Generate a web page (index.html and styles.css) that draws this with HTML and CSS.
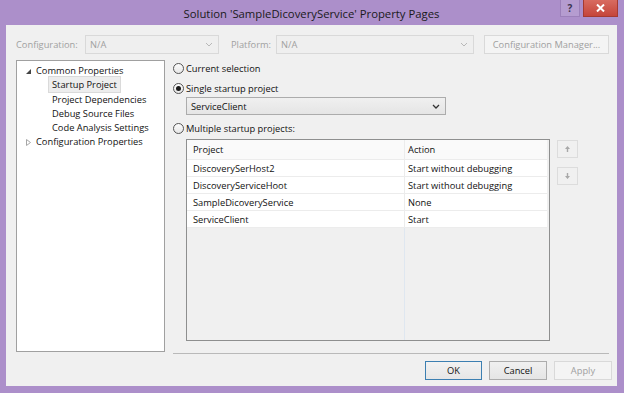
FILE: index.html
```html
<!DOCTYPE html>
<html lang="en">
<head>
  <meta charset="UTF-8">
  <title>Property Pages</title>
  <link rel="stylesheet" href="styles.css">
</head>
<body>
  <div class="window">
    <div class="titlebar">
      <span class="title">Solution 'SampleDicoveryService' Property Pages</span>
      <div class="caption-buttons">
        <span class="cap-btn help">?</span>
        <span class="cap-btn close">
          <svg width="9" height="8" viewBox="0 0 9 8"><path d="M1 0.5 L8 7.5 M8 0.5 L1 7.5" stroke="#fff" stroke-width="2"/></svg>
        </span>
      </div>
    </div>

    <div class="client">
      <div class="config-row">
        <span class="dim label-config">Configuration:</span>
        <div class="combo disabled combo-config">
          <span>N/A</span>
          <svg width="8" height="5" viewBox="0 0 8 5"><path d="M1 1 L4 4 L7 1" fill="none" stroke="#b8b8b8" stroke-width="1"/></svg>
        </div>
        <span class="dim label-platform">Platform:</span>
        <div class="combo disabled combo-platform">
          <span>N/A</span>
          <svg width="8" height="5" viewBox="0 0 8 5"><path d="M1 1 L4 4 L7 1" fill="none" stroke="#b8b8b8" stroke-width="1"/></svg>
        </div>
        <span class="btn disabled cfg-manager">Configuration Manager...</span>
      </div>

      <div class="main">
        <ul class="tree">
          <li class="node">
            <svg class="twisty" width="5" height="5" viewBox="0 0 5 5"><path d="M5 0 L5 5 L0 5 Z" fill="#444"/></svg>
            Common Properties
          </li>
          <li class="leaf"><span class="selected">Startup Project</span></li>
          <li class="leaf"><span>Project Dependencies</span></li>
          <li class="leaf"><span>Debug Source Files</span></li>
          <li class="leaf"><span>Code Analysis Settings</span></li>
          <li class="node">
            <svg class="twisty" width="5" height="7" viewBox="0 0 5 7"><path d="M0.5 0.5 L4.5 3.5 L0.5 6.5 Z" fill="none" stroke="#a6a6a6" stroke-width="1"/></svg>
            Configuration Properties
          </li>
        </ul>

        <div class="page">
          <div class="radio-row"><span class="radio"></span>Current selection</div>
          <div class="radio-row second"><span class="radio checked"></span>Single startup project</div>
          <div class="combo project-combo">
            <span>ServiceClient</span>
            <svg width="8" height="5" viewBox="0 0 8 5"><path d="M1 1 L4 4 L7 1" fill="none" stroke="#333" stroke-width="1.3"/></svg>
          </div>
          <div class="radio-row third"><span class="radio"></span>Multiple startup projects:</div>

          <div class="grid-area">
            <div class="grid">
              <div class="grid-head">
                <span>Project</span>
                <span>Action</span>
              </div>
              <div class="grid-row"><span>DiscoverySerHost2</span><span>Start without debugging</span></div>
              <div class="grid-row"><span>DiscoveryServiceHoot</span><span>Start without debugging</span></div>
              <div class="grid-row"><span>SampleDicoveryService</span><span>None</span></div>
              <div class="grid-row"><span>ServiceClient</span><span>Start</span></div>
              <div class="grid-fill"><span></span><span></span></div>
            </div>
            <div class="move-buttons">
              <span class="move-btn">
                <svg width="5" height="6" viewBox="0 0 5 6"><path d="M2.5 0 L5 3 L3.2 3 L3.2 6 L1.8 6 L1.8 3 L0 3 Z" fill="#a8a8a8"/></svg>
              </span>
              <span class="move-btn">
                <svg width="5" height="6" viewBox="0 0 5 6"><path d="M2.5 6 L5 3 L3.2 3 L3.2 0 L1.8 0 L1.8 3 L0 3 Z" fill="#a8a8a8"/></svg>
              </span>
            </div>
          </div>

          <div class="separator"></div>
        </div>
      </div>

      <div class="dialog-buttons">
        <span class="btn default">OK</span>
        <span class="btn">Cancel</span>
        <span class="btn disabled">Apply</span>
      </div>
    </div>
  </div>
</body>
</html>
```

FILE: styles.css
```css
body {
  margin: 0;
  padding: 0;
  font-family: "Open Sans", "Noto Sans", sans-serif;
  font-size: 9.3px;
  color: #111;
}

.window {
  width: 624px;
  height: 393px;
  box-sizing: border-box;
  background-color: #ac8fca;
  padding: 0 7px 7px 6px;
  display: flex;
  flex-direction: column;
}

.titlebar {
  height: 25px;
  position: relative;
  display: flex;
  align-items: center;
  justify-content: center;
}

.title {
  font-size: 11.3px;
  color: #1a1a1a;
  margin-top: 2px;
}

.caption-buttons {
  position: absolute;
  top: 0;
  right: -1px;
  display: flex;
  gap: 3px;
}

.cap-btn {
  height: 17px;
  box-sizing: border-box;
  display: flex;
  align-items: center;
  justify-content: center;
}

.help {
  width: 20px;
  background-color: #b59cd0;
  border: 1px solid #9c80ba;
  border-top: none;
  color: #3c3450;
  font-size: 10px;
  font-weight: bold;
}

.close {
  width: 35px;
  background: linear-gradient(#d86b60, #c5453a);
  border: 1px solid #a53a31;
  border-top: none;
}

.client {
  flex: 1;
  background-color: #f0f0f0;
  padding: 10px 5px 0 10px;
  display: flex;
  flex-direction: column;
}

.config-row {
  display: flex;
  align-items: center;
  height: 19px;
}

.dim {
  color: #a0a0a0;
}

.label-config {
  width: 69px;
}

.label-platform {
  width: 45px;
  margin-left: 12px;
}

.combo {
  height: 19px;
  box-sizing: border-box;
  display: flex;
  align-items: center;
  justify-content: space-between;
  padding: 0 5px 0 4px;
  border: 1px solid #acacac;
  background: linear-gradient(#f0f0f0, #e5e5e5);
}

.combo.disabled {
  border-color: #d9d9d9;
  background: #efefef;
  color: #a0a0a0;
}

.combo-config {
  width: 134px;
}

.combo-platform {
  width: 198px;
}

.btn {
  height: 19px;
  box-sizing: border-box;
  display: flex;
  align-items: center;
  justify-content: center;
  border: 1px solid #acacac;
  background: linear-gradient(#f0f0f0, #e5e5e5);
}

.btn.disabled {
  border-color: #d9d9d9;
  background: #f4f4f4;
  color: #a0a0a0;
}

.cfg-manager {
  width: 125px;
  margin-left: 10px;
}

.main {
  display: flex;
  gap: 8px;
  height: 294px;
  margin-top: 6px;
  margin-right: 3px;
}

.tree {
  list-style: none;
  margin: 0;
  padding: 3px 0 0 0;
  width: 149px;
  height: 292px;
  box-sizing: border-box;
  background-color: #fff;
  border: 1px solid #a0a0a0;
}

.tree li {
  height: 14.3px;
  line-height: 14.3px;
  white-space: nowrap;
}

.node {
  display: flex;
  align-items: center;
  padding-left: 9px;
}

.twisty {
  width: 5px;
  margin-right: 5px;
}

.leaf {
  padding-left: 31px;
}

.leaf span {
  padding: 1px 3px;
  border: 1px solid transparent;
}

.leaf .selected {
  background-color: #ededed;
  border-color: #dadada;
}

.page {
  flex: 1;
  display: flex;
  flex-direction: column;
}

.radio-row {
  display: flex;
  align-items: center;
  height: 14px;
  margin-top: 1px;
}

.radio-row.second {
  margin-top: 6px;
}

.radio-row.third {
  margin-top: 6px;
}

.radio {
  width: 11px;
  height: 11px;
  box-sizing: border-box;
  border: 1px solid #555;
  border-radius: 50%;
  background: linear-gradient(#fdfdfd, #e6e6e6);
  margin-right: 2px;
  display: flex;
  align-items: center;
  justify-content: center;
}

.radio.checked::after {
  content: "";
  width: 5px;
  height: 5px;
  border-radius: 50%;
  background-color: #1a1a1a;
}

.project-combo {
  width: 260px;
  height: 18px;
  margin: 2px 0 0 13px;
}

.grid-area {
  display: flex;
  gap: 7px;
  margin: 4px 0 0 13px;
}

.grid {
  width: 364px;
  height: 202px;
  box-sizing: border-box;
  border: 1px solid #8e8f8f;
  background-color: #f0f0f0;
  padding-right: 2px;
  display: flex;
  flex-direction: column;
}

.grid-head,
.grid-row,
.grid-fill {
  display: grid;
  grid-template-columns: 217px 1fr;
}

.grid-head {
  height: 19px;
  background-color: #fafafa;
}

.grid-head span,
.grid-row span {
  display: flex;
  align-items: center;
  padding-left: 6px;
}

.grid-head span + span,
.grid-row span + span {
  border-left: 1px solid #ececec;
  padding-left: 3px;
}

.grid-row {
  height: 16px;
  border-top: 1px solid #ececec;
  background-color: #fff;
}

.grid-fill {
  flex: 1;
  border-top: 1px solid #ececec;
}

.grid-fill span + span {
  border-left: 1px solid #dfe7f0;
}

.move-buttons {
  display: flex;
  flex-direction: column;
  gap: 9px;
  margin-top: 1px;
}

.move-btn {
  width: 21px;
  height: 18px;
  box-sizing: border-box;
  border: 1px solid #dcdcdc;
  background-color: #f0f0f0;
  display: flex;
  align-items: center;
  justify-content: center;
}

.separator {
  margin-top: auto;
  border-top: 1px solid #b9b9b9;
  margin-bottom: 0;
}

.dialog-buttons {
  display: flex;
  justify-content: flex-end;
  gap: 7px;
  margin-top: 7px;
}

.dialog-buttons .btn {
  width: 58px;
  height: 19px;
}

.btn.default {
  width: 57px;
  border-color: #3c7fb1;
  background: linear-gradient(#f2f2f2, #e6e6e6);
}
```
